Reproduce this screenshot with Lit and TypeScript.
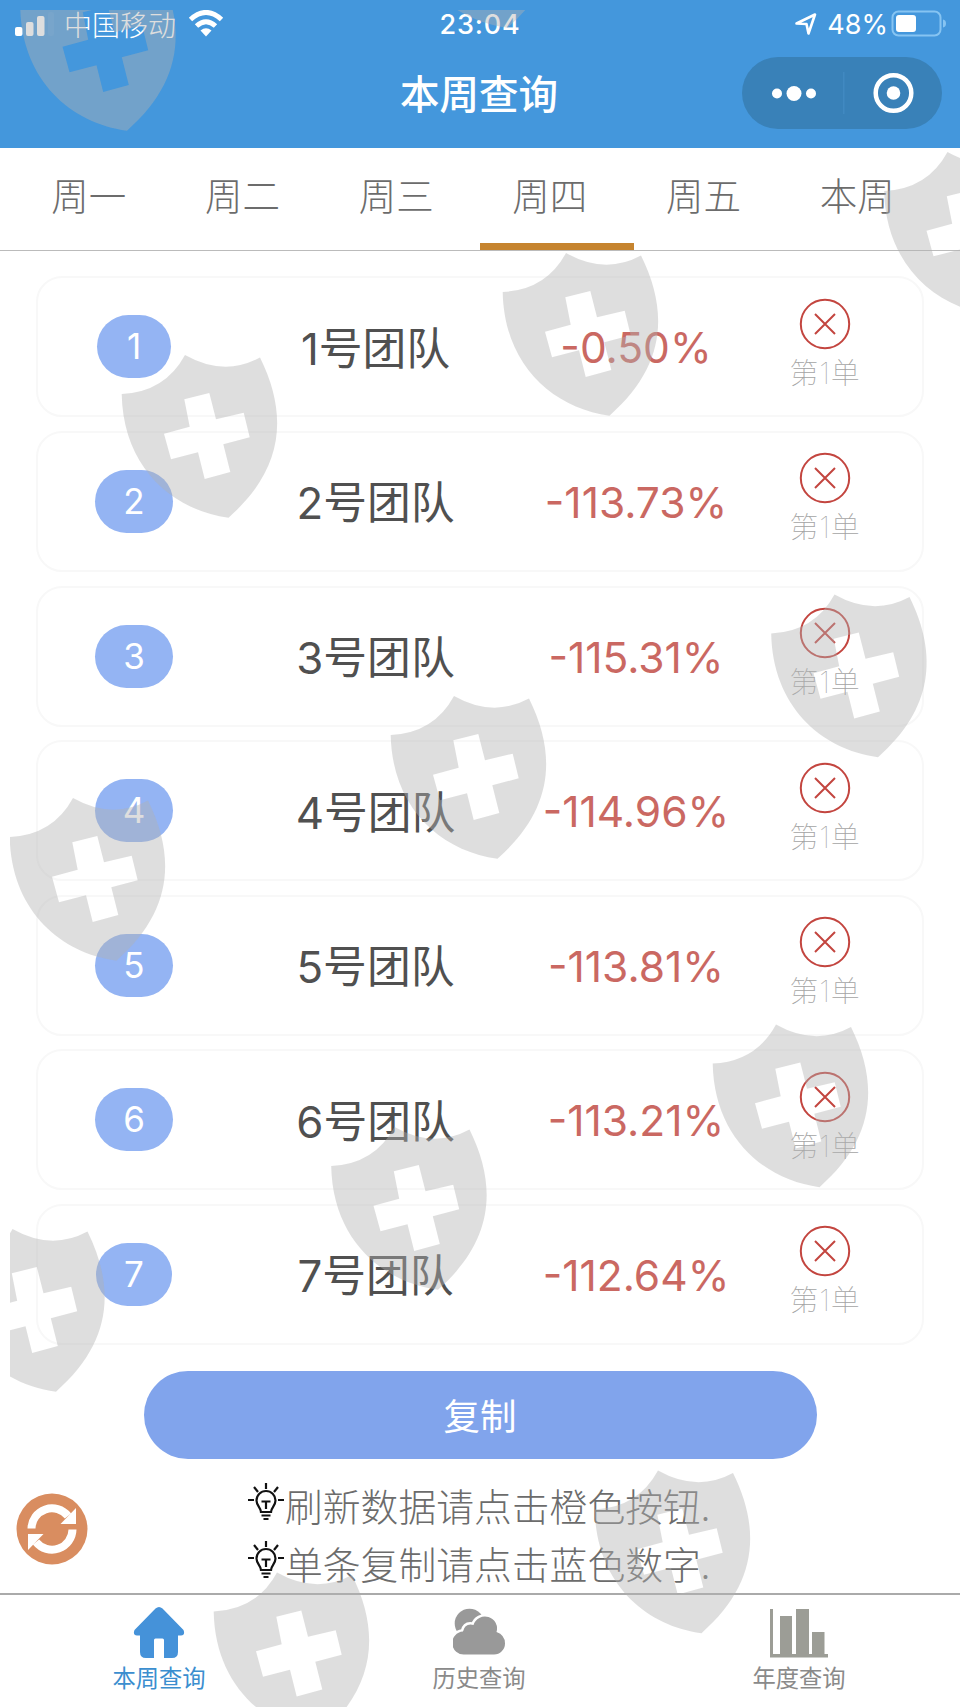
import { LitElement, html, css, svg } from "lit";
import { customElement, property, state } from "lit/decorators.js";
import { classMap } from "lit/directives/class-map.js";

interface Team {
  id: number;
  rate: string;
}

const TABS = ["周一", "周二", "周三", "周四", "周五", "本周"];

const TEAMS: Team[] = [
  { id: 1, rate: "-0.50%" },
  { id: 2, rate: "-113.73%" },
  { id: 3, rate: "-115.31%" },
  { id: 4, rate: "-114.96%" },
  { id: 5, rate: "-113.81%" },
  { id: 6, rate: "-113.21%" },
  { id: 7, rate: "-112.64%" },
];

const SHIELDS = [
  [19.5, -33],
  [400, -136],
  [883.5, 151],
  [502, 252],
  [121, 354],
  [770.5, 593.5],
  [390, 695],
  [9, 797],
  [712, 1023.5],
  [330.5, 1126],
  [-51.5, 1228],
  [594, 1469.5],
  [213, 1571.5],
];

@customElement("status-header")
export class StatusHeader extends LitElement {
  static styles = css`
    :host {
      display: block;
      height: 148px;
      background: #4497dc;
      color: #fff;
    }

    .status {
      display: grid;
      grid-template-columns: 1fr auto 1fr;
      align-items: center;
      height: 48px;
      padding: 0 13px 0 15px;
      font-size: 27px;
      line-height: 32px;
    }

    .left,
    .right {
      display: flex;
      align-items: center;
    }

    .right {
      justify-content: flex-end;
    }

    .carrier {
      margin: 0 12px 0 9px;
      font-size: 28px;
      font-weight: 300;
    }

    .time {
      padding: 2px 2px 0 0;
      font-family: Inter, sans-serif;
      font-size: 27px;
      font-weight: 500;
      letter-spacing: 0.8px;
    }

    .percent {
      margin: 0 3px 0 9px;
      padding-top: 2px;
      font-family: Inter, sans-serif;
      font-size: 27px;
    }

    .nav {
      display: grid;
      grid-template-columns: 1fr auto 1fr;
      align-items: center;
      height: 90px;
      padding: 0 18px 0 17px;
    }

    .title {
      grid-column: 2;
      padding: 0 1px 2px 0;
      font-size: 39.5px;
      font-weight: 500;
      line-height: 56px;
    }

    .capsule {
      justify-self: end;
      width: 200px;
      height: 72px;
      border-radius: 36px;
      background: #3981b8;
    }

    svg {
      display: block;
    }
  `;

  render() {
    return html`
      <div class="status">
        <div class="left">
          <svg width="40" height="26" viewBox="0 0 40 26" fill="#fff">
            <rect x="0" y="16" width="7.500" height="9" rx="2" />
            <rect x="11" y="11" width="7.500" height="14" rx="2" />
            <rect x="22" y="5" width="7.500" height="20" rx="2" />
            <rect x="33" y="1" width="6" height="24" rx="2" opacity=".06" />
          </svg>
          <span class="carrier">中国移动</span>
          <svg width="36" height="28" viewBox="0 0 36 28">
            <g fill="none" stroke="#fff" stroke-width="5">
              <path d="M2.500 9.500Q18-4.500 33.500 9.500" />
              <path d="M8.500 16Q18 7.500 27.500 16" />
            </g>
            <path d="M12.500 20.500Q18 16 23.500 20.500L18 26.500Z" fill="#fff" />
          </svg>
        </div>
        <span class="time">23:04</span>
        <div class="right">
          <svg width="24" height="24" viewBox="0 0 24 24">
            <path
              d="M2.500 11.500L21 2.500L14.500 21.500L12.500 12Z"
              fill="none"
              stroke="#fff"
              stroke-width="2.600"
              stroke-linejoin="round"
            />
          </svg>
          <span class="percent">48%</span>
          <svg width="56" height="28" viewBox="1 0 56 28">
            <rect
              x="2.500"
              y="1.500"
              width="48"
              height="24"
              rx="6"
              fill="none"
              stroke="#86c4f2"
              stroke-width="2"
            />
            <rect x="6" y="5" width="20" height="17" rx="3" fill="#fff" />
            <path d="M53 9.500Q56 10 56 13.500T53 17.500Z" fill="#86c4f2" />
          </svg>
        </div>
      </div>
      <div class="nav">
        <div class="title">本周查询</div>
        <svg class="capsule" viewBox="0 0 200 72" fill="#fff">
          <circle cx="35" cy="36.500" r="5" />
          <circle cx="52" cy="36.500" r="7.500" />
          <circle cx="69" cy="36.500" r="5" />
          <rect x="101" y="15" width="1.500" height="42" fill="#4189c1" />
          <circle
            cx="151.500"
            cy="36"
            r="17.800"
            fill="none"
            stroke="#fff"
            stroke-width="4.500"
          />
          <circle cx="151.500" cy="36" r="6.800" />
        </svg>
      </div>
    `;
  }
}

@customElement("team-card")
export class TeamCard extends LitElement {
  static styles = css`
    :host {
      display: grid;
      grid-template-columns: 174px 309px 212px 1fr;
      align-items: center;
      justify-items: center;
      box-sizing: border-box;
      height: 141px;
      padding: 0 14px 0 9px;
      border: 2px solid #f8f8f8;
      border-radius: 26px;
      background: #fff;
    }

    .badge {
      box-sizing: border-box;
      min-width: 74px;
      padding: 0 28px;
      border-radius: 32px;
      background: #94b4f3;
      color: #fff;
      font-family: Inter, sans-serif;
      font-size: 35px;
      line-height: 63px;
      text-align: center;
    }

    .name {
      padding-top: 6px;
      color: #505050;
      font-family: Inter, "Noto Sans CJK SC", sans-serif;
      font-size: 43.8px;
      line-height: 60px;
    }

    .rate {
      padding-top: 3px;
      color: #ca6862;
      font-family: Inter, sans-serif;
      font-size: 42.5px;
      line-height: 60px;
    }

    .order {
      display: flex;
      flex-direction: column;
      align-items: center;
      gap: 5px;
      padding-bottom: 3px;
      color: #a4a4a4;
      font-family: Inter, "Noto Sans CJK SC", sans-serif;
      font-size: 29px;
      font-weight: 100;
      line-height: 38px;
      letter-spacing: 0.8px;
    }

    svg {
      display: block;
    }
  `;

  @property({ type: Number }) index = 0;
  @property({ type: String }) rate = "";

  render() {
    return html`
      <span class="badge">${this.index}</span>
      <span class="name">${this.index}号团队</span>
      <span class="rate">${this.rate}</span>
      <div class="order">
        <svg width="52" height="52" viewBox="0 0 52 52">
          <g fill="none" stroke="#c3453f" stroke-width="2">
            <circle cx="26" cy="26" r="24.200" />
            <path d="M16 16L36 36M36 16L16 36" />
          </g>
        </svg>
        <span>第1单</span>
      </div>
    `;
  }
}

@customElement("app-root")
export class AppRoot extends LitElement {
  static styles = css`
    :host {
      display: flex;
      flex-direction: column;
      position: relative;
      width: 960px;
      height: 1707px;
      overflow: hidden;
      background: #fff;
      font-family: "Noto Sans CJK SC", sans-serif;
    }

    svg {
      display: block;
    }

    .tabs {
      display: grid;
      grid-template-columns: repeat(6, 1fr);
      box-sizing: border-box;
      height: 103px;
      padding: 0 19px;
      border-bottom: 1px solid #bbb;
    }

    .tab {
      box-sizing: border-box;
      height: 102px;
      padding-right: 14px;
      border-bottom: 7px solid transparent;
      color: #6c6c6c;
      font-size: 37.5px;
      font-weight: 300;
      line-height: 91px;
      text-align: center;
      white-space: nowrap;
    }

    .tab.active {
      border-bottom-color: #c6842f;
    }

    .list {
      display: flex;
      flex-direction: column;
      gap: 13.6px;
      padding: 25.4px 36px 0 36px;
    }

    .copy {
      align-self: center;
      width: 673px;
      height: 88px;
      margin-top: 25.6px;
      padding: 0;
      border: none;
      border-radius: 44px;
      background: #81a4ec;
      color: #fff;
      font-family: inherit;
      font-size: 36.5px;
      line-height: 88px;
    }

    .footer {
      display: grid;
      grid-template-columns: 247px 1fr;
      align-items: center;
      height: 134px;
    }

    .refresh {
      margin: 7px 0 0 16px;
    }

    .tips {
      padding-top: 15px;
    }

    .tip {
      display: flex;
      align-items: center;
      height: 58px;
      color: #6c6c6c;
      font-size: 37.8px;
      font-weight: 300;
      white-space: nowrap;
    }

    .tip svg {
      margin-top: -7px;
    }

    .tabbar {
      display: grid;
      grid-template-columns: repeat(3, 1fr);
      flex: 1;
      border-top: 2px solid #aaa;
      color: #8a8a8a;
      font-size: 23.3px;
      line-height: 32px;
    }

    .item {
      display: flex;
      flex-direction: column;
      align-items: center;
      gap: 1px;
      padding: 11px 2px 0 0;
    }

    .item.active {
      color: #3b8ecf;
    }

    .watermark {
      position: absolute;
      inset: 0;
      pointer-events: none;
    }
  `;

  @state() private activeTab = 3;

  render() {
    return html`
      <status-header></status-header>
      <div class="tabs">
        ${TABS.map(
          (label, i) => html`
            <div
              class=${classMap({ tab: true, active: i === this.activeTab })}
              @click=${() => (this.activeTab = i)}
            >
              ${label}
            </div>
          `
        )}
      </div>
      <div class="list">
        ${TEAMS.map(
          (team) => html`
            <team-card .index=${team.id} .rate=${team.rate}></team-card>
          `
        )}
      </div>
      <button class="copy">复制</button>
      <div class="footer">
        ${this._renderRefresh()}
        <div class="tips">
          <div class="tip">${this._renderBulb()}刷新数据请点击橙色按钮.</div>
          <div class="tip">${this._renderBulb()}单条复制请点击蓝色数字.</div>
        </div>
      </div>
      <div class="tabbar">
        <div class="item active">
          <svg width="52" height="54" viewBox="0 0 52 54" fill="#4592d9">
            <path
              d="M22.500 2.500Q26-.5 29.500 2.500L50.500 24Q52.500 29 48 29.500H45V46Q45 52 39 52H31V34Q31 32.500 29.500 32.500H22.500Q21 32.500 21 34V52H13Q7 52 7 46V29.500H4Q-.5 29 1.500 24Z"
            />
          </svg>
          <span>本周查询</span>
        </div>
        <div class="item">
          <svg width="52" height="54" viewBox="0 0 52 54" fill="#999">
            <circle cx="16.500" cy="17.500" r="14.800" />
            <path
              d="M11.500 48.500A11.300 11.300 0 0 1 10 25.500Q12 17 20.500 19A12 12 0 0 1 43.500 26Q52 29 52 37.500A11 11 0 0 1 41 48.500Z"
              stroke="#fff"
              stroke-width="5"
              paint-order="stroke"
            />
          </svg>
          <span>历史查询</span>
        </div>
        <div class="item">
          <svg width="58" height="54" viewBox="0 0 58 54" fill="#9c9d96">
            <path
              d="M0 3H3V48H58V51.500H0ZM10 10H22V48H10ZM26 3H39V48H26ZM42 26H54.500V48H42Z"
            />
          </svg>
          <span>年度查询</span>
        </div>
      </div>
      ${this._renderWatermark()}
    `;
  }

  private _renderRefresh() {
    return html`
      <svg class="refresh" width="72" height="72" viewBox="0 0 72 72">
        <circle cx="36" cy="36" r="35.500" fill="#d98d60" />
        <g fill="none" stroke="#fff" stroke-width="8">
          <path d="M15.500 35.500A20.500 20.500 0 0 1 52 23" />
          <path d="M56.500 36.500A20.500 20.500 0 0 1 20 49" />
        </g>
        <path d="M60 15V31H44.500ZM12 57V41H27.500Z" fill="#fff" />
      </svg>
    `;
  }

  private _renderBulb() {
    return html`
      <svg width="38" height="40" viewBox="0 0 38 40">
        <g fill="none" stroke="#111" stroke-width="2.200">
          <path
            d="M1 19H7M31 19H37M19 2V8M7 6L11 11M31 6L27 11M14 31C14 27 9.500 25 9.500 19.500A9.500 9.500 0 0 1 28.500 19.500C28.500 25 24 27 24 31ZM14.500 20.500H23.500M19 20.500V28M14.500 34.500H23.500M16.500 38H21.500"
          />
        </g>
      </svg>
    `;
  }

  private _renderWatermark() {
    return html`
      <svg class="watermark" width="960" height="1707" viewBox="0 0 960 1707">
        <defs>
          <clipPath id="area"><rect x="10" y="10" width="950" height="1697" /></clipPath>
        </defs>
        <g
          clip-path="url(#area)"
          fill="#b1b1b1"
          fill-opacity=".425"
          fill-rule="evenodd"
        >
          ${SHIELDS.map(
            ([x, y]) => svg`
              <path
                transform="translate(${x} ${y})"
                d="M.7 40Q44 38 64 1Q103 23 139 3.500C168 62 162 116 107.500 163.700C50 156 2 112 .7 40ZM63.300 45.300L88.300 39L95 65.300L122.700 58.700L128.700 83.300L102.300 90.300L109.300 118L83.700 125L77 98.300L50 105.300L43 79.700L68.700 72.700Z"
              />
            `
          )}
        </g>
      </svg>
    `;
  }
}
